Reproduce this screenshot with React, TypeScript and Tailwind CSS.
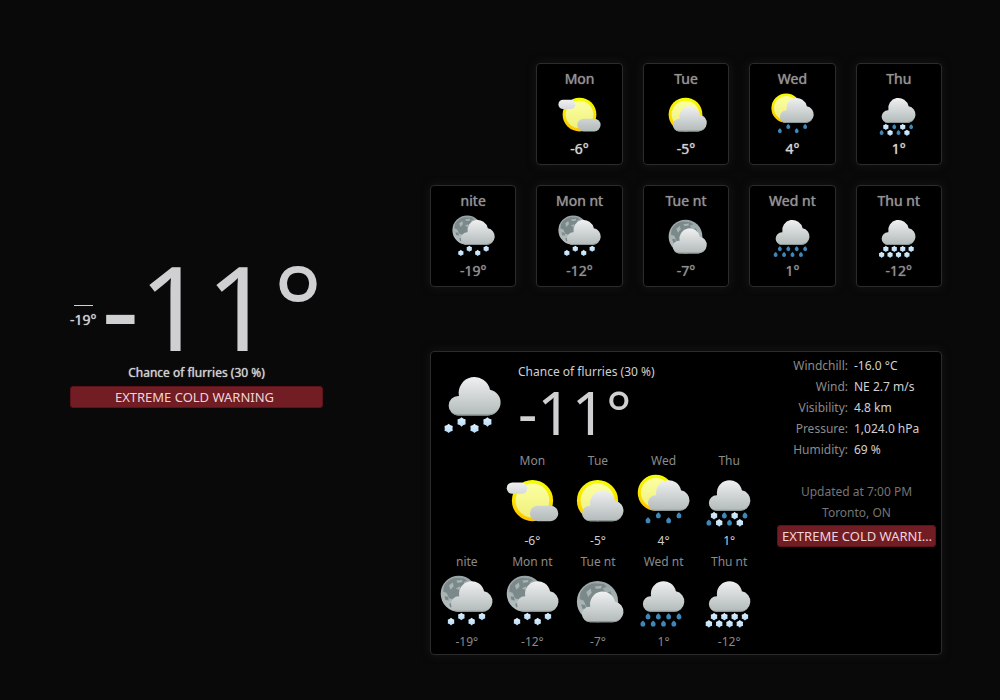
import React from "react";

type Kind =
  | "few-clouds"
  | "clouds"
  | "showers-day"
  | "snow-rain"
  | "snow-night"
  | "clouds-night"
  | "showers"
  | "snow"
  | "flurries";

type Period = { label: string; temp: string; kind: Kind };

const days: Period[] = [
  { label: "Mon", temp: "-6°", kind: "few-clouds" },
  { label: "Tue", temp: "-5°", kind: "clouds" },
  { label: "Wed", temp: "4°", kind: "showers-day" },
  { label: "Thu", temp: "1°", kind: "snow-rain" },
];

const nights: Period[] = [
  { label: "nite", temp: "-19°", kind: "snow-night" },
  { label: "Mon nt", temp: "-12°", kind: "snow-night" },
  { label: "Tue nt", temp: "-7°", kind: "clouds-night" },
  { label: "Wed nt", temp: "1°", kind: "showers" },
  { label: "Thu nt", temp: "-12°", kind: "snow" },
];

const details = [
  ["Windchill:", "-16.0 °C"],
  ["Wind:", "NE 2.7 m/s"],
  ["Visibility:", "4.8 km"],
  ["Pressure:", "1,024.0 hPa"],
  ["Humidity:", "69 %"],
];

function Gradients() {
  return (
    <svg width="0" height="0" className="absolute" aria-hidden="true">
      <defs>
        <linearGradient id="cloud" x1="0" y1="0" x2="0" y2="1">
          <stop offset="0" stopColor="#eff0f1" />
          <stop offset="1" stopColor="#b2bab9" />
        </linearGradient>
        <linearGradient id="wisp" x1="0" y1="0" x2="0" y2="1">
          <stop offset="0" stopColor="#eff0f1" />
          <stop offset="1" stopColor="#d6dada" />
        </linearGradient>
        <linearGradient id="wispLow" x1="0" y1="0" x2="0" y2="1">
          <stop offset="0" stopColor="#d0d4d5" />
          <stop offset="1" stopColor="#b2bab9" />
        </linearGradient>
        <linearGradient id="sunRing" x1="0" y1="0" x2="0" y2="1">
          <stop offset="0" stopColor="#f6ff00" />
          <stop offset="1" stopColor="#ffc400" />
        </linearGradient>
        <linearGradient id="sunDisc" x1="0" y1="0" x2="0" y2="1">
          <stop offset="0" stopColor="#fcffa2" />
          <stop offset="1" stopColor="#eff07c" />
        </linearGradient>
        <linearGradient id="moonDisc" x1="0" y1="0" x2="0" y2="1">
          <stop offset="0" stopColor="#98a5a6" />
          <stop offset="1" stopColor="#b9c1c1" />
        </linearGradient>
        <linearGradient id="flake" x1="0" y1="0" x2="0" y2="1">
          <stop offset="0" stopColor="#dff0fc" />
          <stop offset="1" stopColor="#b5dcf8" />
        </linearGradient>
      </defs>
    </svg>
  );
}

function Cloud({ x, y }: { x: number; y: number }) {
  const d =
    "M4.5 18A4.5 4.5 0 0 1 4.5 9L4.8 9A7.3 7.3 0 1 1 19.2 6.1A6 6 0 0 1 18 18Z";
  return (
    <g transform={`translate(${x} ${y})`}>
      <path d={d} fill="url(#cloud)" />
      <path
        d="M1 16.3A4.5 4.5 0 0 0 4.5 18H18A6 6 0 0 0 23 15.3A6 6 0 0 1 18 17.4H4.5A4.5 4.5 0 0 1 1 16.3Z"
        fill="#8d9696"
      />
    </g>
  );
}

function Sun({ c, r }: { c: number; r: number }) {
  return (
    <>
      <circle cx={c} cy={c} r={r} fill="url(#sunRing)" />
      <circle cx={c} cy={c} r={r * 0.82} fill="url(#sunDisc)" />
    </>
  );
}

function Moon({ c, r }: { c: number; r: number }) {
  return (
    <g transform={`translate(${c} ${c}) scale(${r / 12})`}>
      <circle r="12" fill="url(#moonDisc)" />
      <path
        d="M-10 -4.5C-8.6 -8 -5.5 -10 -2 -10.6L3.5 -10.2L5.5 -8.8L3 -7.6L5 -5L7.5 -6L9 -2L6 1L2 5L-2 8L-3 4L-6.5 3L-8 -0.5L-10.4 -1.5Z"
        fill="#7c898a"
      />
      <path
        d="M-6.5 -5.5L-4 -7.5L-3.4 -5L-5.5 -2.6ZM-1.5 -8.8L2.5 -9.2L2 -7.6L-1 -7.4ZM-2 -3.5L1 -5L0.6 -2.5Z"
        fill="#a9b4b4"
      />
      <path
        d="M-9.5 1.6L-7.2 2L-6.6 4.4L-8.8 4.2ZM-6.4 6.6L-4 6L-3.4 8.4L-5.8 9Z"
        fill="#7c898a"
      />
    </g>
  );
}

type Drop = [number, number];

function Flakes({ at }: { at: Drop[] }) {
  return (
    <>
      {at.map(([x, y]) => (
        <path
          key={`${x}-${y}`}
          transform={`translate(${x} ${y})`}
          d="M0 -2.2L0.7 -1.6L1.9 -1.1L1.8 0L1.9 1.1L0.7 1.6L0 2.2L-0.7 1.6L-1.9 1.1L-1.8 0L-1.9 -1.1L-0.7 -1.6Z"
          fill="url(#flake)"
        />
      ))}
    </>
  );
}

function Drops({ at }: { at: Drop[] }) {
  return (
    <>
      {at.map(([x, y]) => (
        <path
          key={`${x}-${y}`}
          transform={`translate(${x} ${y})`}
          d="M0 -1.9C0.6 -1.4 1.4 -0.8 1.4 0.1A1.4 1.5 0 0 1 -1.4 0.1C-1.4 -0.8 -0.6 -1.4 0 -1.9Z"
          fill="#3e87b9"
        />
      ))}
    </>
  );
}

const scattered: Drop[] = [[7, 27.7], [13, 24.7], [19, 27.7], [25, 24.7]];
const heavy: Drop[] = [
  [7, 24.8], [13, 24.8], [19, 24.8], [25, 24.8],
  [4, 29], [10, 29], [16, 29], [22, 29],
];

function WeatherIcon({ kind, className }: { kind: Kind; className: string }) {
  return (
    <svg viewBox="0 0 32 32" className={className} aria-hidden="true">
      {kind === "few-clouds" && (
        <>
          <Sun c={16} r={12} />
          <rect x="1" y="5.5" width="12" height="6.6" rx="3.3" fill="url(#wisp)" />
          <rect x="14.5" y="19" width="16.5" height="9" rx="4.5" fill="url(#wispLow)" />
        </>
      )}
      {kind === "clouds" && (
        <>
          <Sun c={16} r={12} />
          <Cloud x={7} y={10} />
        </>
      )}
      {kind === "showers-day" && (
        <>
          <Sun c={11.5} r={10.5} />
          <Cloud x={7} y={4} />
          <Drops at={scattered} />
        </>
      )}
      {kind === "snow-rain" && (
        <>
          <Cloud x={4} y={4} />
          <Flakes at={[heavy[0], heavy[2], heavy[5], heavy[7]]} />
          <Drops at={[heavy[1], heavy[3], heavy[4], heavy[6]]} />
        </>
      )}
      {kind === "snow-night" && (
        <>
          <Moon c={11.5} r={10.5} />
          <Cloud x={7} y={4} />
          <Flakes at={scattered} />
        </>
      )}
      {kind === "clouds-night" && (
        <>
          <Moon c={16} r={12} />
          <Cloud x={7} y={10} />
        </>
      )}
      {kind === "showers" && (
        <>
          <Cloud x={4} y={4} />
          <Drops at={heavy} />
        </>
      )}
      {kind === "snow" && (
        <>
          <Cloud x={4} y={4} />
          <Flakes at={heavy} />
        </>
      )}
      {kind === "flurries" && (
        <>
          <Cloud x={4} y={4} />
          <Flakes at={[[4, 28], [10, 25], [16, 28], [22, 25]]} />
        </>
      )}
    </svg>
  );
}

function Card({ period, night, first }: { period: Period; night?: boolean; first?: boolean }) {
  return (
    <li
      className={`flex flex-col items-center rounded border border-[#2b2b2b] bg-black py-[5px] text-sm leading-5 shadow-[0_0_8px_#161818] [text-shadow:0_0_1px_currentColor] ${first ? "col-start-2" : ""}`}
    >
      <h3 className="text-[#939393]">{period.label}</h3>
      <WeatherIcon kind={period.kind} className="mt-[3px] size-[45px]" />
      <p className={`mt-0.5 ${night ? "text-[#8f8f8f]" : "text-[#d2d2d2]"}`}>{period.temp}</p>
    </li>
  );
}

function SmallPeriod({ period, night, first }: { period: Period; night?: boolean; first?: boolean }) {
  return (
    <li className={`flex flex-col items-center ${first ? "col-start-2" : ""}`}>
      <h3 className="text-[#8b8b8b]">{period.label}</h3>
      <WeatherIcon kind={period.kind} className="mt-1 size-[55px]" />
      <p className={`mt-[5px] ${night ? "text-[#8b8b8b]" : "text-[#cfcfcf]"}`}>{period.temp}</p>
    </li>
  );
}

export default function App() {
  return (
    <main className="flex min-h-screen items-start justify-between gap-10 bg-[#090909] pt-[63px] pr-[58px] pb-11 pl-[70px] font-['Noto_Sans',sans-serif] text-xs leading-4 text-[#d0d0d2]">
      <Gradients />
      <section className="mt-[184px] w-[253px]">
        <div className="flex items-center justify-between">
          <p className="mt-[22px] flex flex-col items-center text-sm leading-5 [text-shadow:0_0_1px_currentColor]">
            <span className="mb-1 w-[19px] border-t border-[#d0d0d2]" />
            -19°
          </p>
          <h1 className="text-[117px] leading-[118px]">-11°</h1>
        </div>
        <p className="text-center [text-shadow:0_0_1px_currentColor]">Chance of flurries (30 %)</p>
        <a
          href="#warning"
          className="mt-[5px] block rounded-[3px] border border-[#5d1319] bg-[#721c24] pr-1 text-center text-[13px] leading-5 text-[#f0d5d8]"
        >
          EXTREME COLD WARNING
        </a>
      </section>

      <div className="w-[512px]">
        <ul className="grid grid-cols-5 gap-5">
          {days.map((p, i) => (
            <Card key={p.label} period={p} first={i === 0} />
          ))}
          {nights.map((p) => (
            <Card key={p.label} period={p} night />
          ))}
        </ul>

        <section className="mt-16 flex justify-between rounded border border-[#2b2b2b] bg-black pr-[5px] pb-1 pl-[3px] shadow-[0_0_8px_#161818]">
          <div className="w-[328px]">
            <div className="flex pt-3">
              <WeatherIcon kind="flurries" className="mt-1 ml-1.5 size-[69px]" />
              <div className="ml-[9px]">
                <p>Chance of flurries (30 %)</p>
                <h2 className="text-[60px] leading-[64px]">-11°</h2>
              </div>
            </div>
            <ul className="mt-[9px] grid grid-cols-5 gap-y-[5px]">
              {days.map((p, i) => (
                <SmallPeriod key={p.label} period={p} first={i === 0} />
              ))}
              {nights.map((p) => (
                <SmallPeriod key={p.label} period={p} night />
              ))}
            </ul>
          </div>
          <div className="w-[159px] pt-[3px] leading-[21px]">
            <dl className="grid grid-cols-[71px_1fr] gap-x-1.5">
              {details.map(([name, value]) => (
                <React.Fragment key={name}>
                  <dt className="text-right text-[#8b8b8b]">{name}</dt>
                  <dd>{value}</dd>
                </React.Fragment>
              ))}
            </dl>
            <div className="mt-[21px] text-center text-[#757575]">
              <p>Updated at 7:00 PM</p>
              <p>Toronto, ON</p>
            </div>
            <a
              href="#warning"
              className="mt-0.5 block truncate rounded-[3px] border border-[#5d1319] bg-[#721c24] pl-1 text-[13px] leading-5 text-[#f0d5d8]"
            >
              EXTREME COLD WARNING
            </a>
          </div>
        </section>
      </div>
    </main>
  );
}
